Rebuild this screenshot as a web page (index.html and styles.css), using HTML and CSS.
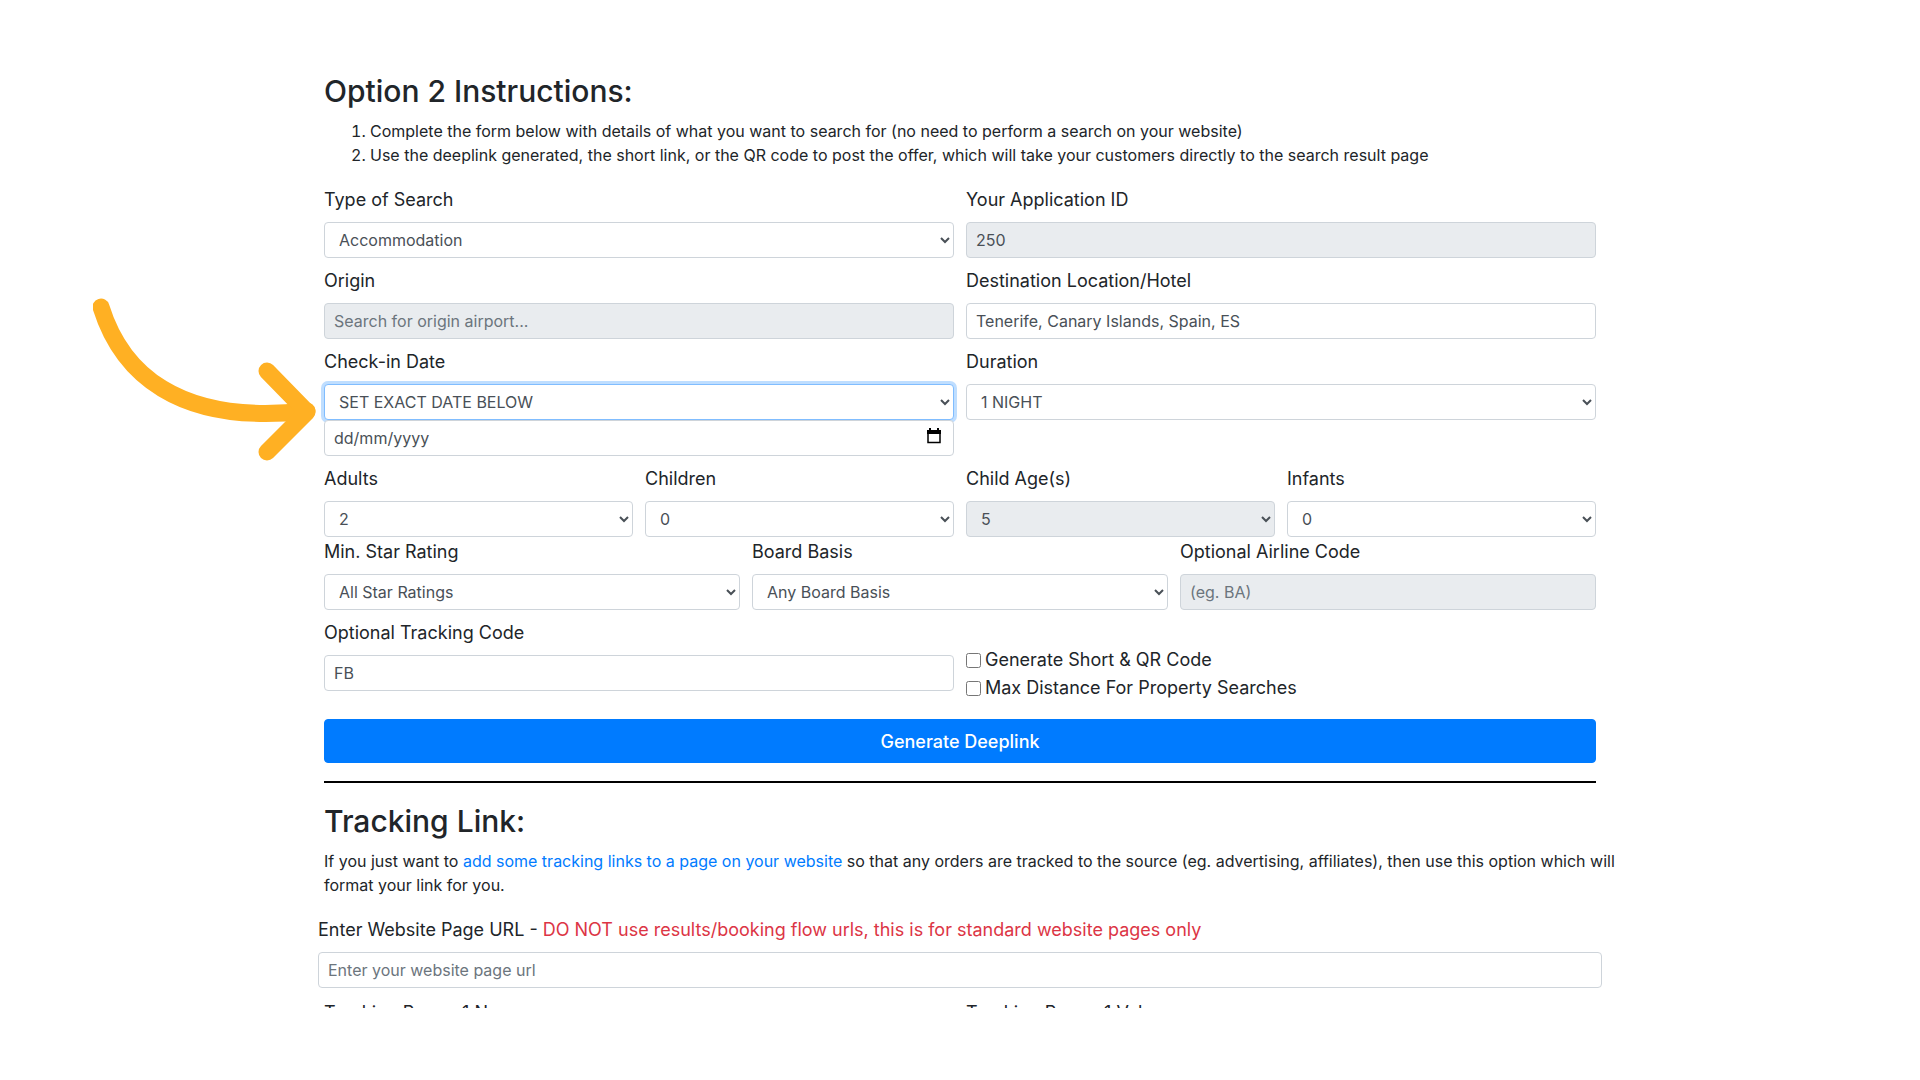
FILE: index.html
```html
<!DOCTYPE html>
<html lang="en-GB">
	<head>
		<meta charset="utf-8">
		<title>Deeplink Generator</title>
		<link rel="stylesheet" href="styles.css">
	</head>
	<body>
	<div class="container">
		<h2>Option 2 Instructions:</h2>
		<ol class="steps">
			<li>Complete the form below with details of what you want to search for (no need to perform a search on your website)</li>
			<li>Use the deeplink generated, the short link, or the QR code to post the offer, which will take your customers directly to the search result page</li>
		</ol>

		<form action="#" method="post" id="deeplinkForm">
			<div class="row">
				<div class="group">
					<label for="searchType">Type of Search</label>
					<select class="control" id="searchType"><option>Accommodation</option></select>
				</div>
				<div class="group">
					<label for="appId">Your Application ID</label>
					<input class="control" type="text" id="appId" value="250" readonly>
				</div>
			</div>
			<div class="row">
				<div class="group">
					<label for="origin">Origin</label>
					<input class="control" type="text" id="origin" placeholder="Search for origin airport..." disabled>
				</div>
				<div class="group">
					<label for="destination">Destination Location/Hotel</label>
					<input class="control" type="text" id="destination" value="Tenerife, Canary Islands, Spain, ES">
				</div>
			</div>
			<div class="row">
				<div class="group checkin">
					<label for="checkin">Check-in Date</label>
					<select class="control active" id="checkin"><option>SET EXACT DATE BELOW</option></select>
					<div class="date">
						<input class="control" type="text" id="exactDate" value="dd/mm/yyyy" aria-label="Exact date">
						<button type="button" class="calendar" aria-label="Show date picker">
							<svg width="14" height="16" viewBox="0 0 14 16"><path d="M1 3h12v11.500H1z" fill="none" stroke="#000" stroke-width="1.500"/><path d="M0 2h14v4H0zM2 0h2v3H2zM10 0h2v3h-2z"/></svg>
						</button>
					</div>
					<svg class="arrow" width="224" height="166" viewBox="0 0 224 166" fill="none" stroke="#ffb023" stroke-width="17" stroke-linecap="round" stroke-linejoin="round"><path d="M8 10C28 74 83 129 214 114"/><path d="M174 74L214 115L174 155"/></svg>
				</div>
				<div class="group">
					<label for="duration">Duration</label>
					<select class="control" id="duration"><option>1 NIGHT</option></select>
				</div>
			</div>
			<div class="row tight">
				<div class="group">
					<label for="adults">Adults</label>
					<select class="control" id="adults"><option>2</option></select>
				</div>
				<div class="group">
					<label for="children">Children</label>
					<select class="control" id="children"><option>0</option></select>
				</div>
				<div class="group">
					<label for="childAge">Child Age(s)</label>
					<select class="control" id="childAge" disabled><option>5</option></select>
				</div>
				<div class="group">
					<label for="infants">Infants</label>
					<select class="control" id="infants"><option>0</option></select>
				</div>
			</div>
			<div class="row">
				<div class="group">
					<label for="stars">Min. Star Rating</label>
					<select class="control" id="stars"><option>All Star Ratings</option></select>
				</div>
				<div class="group">
					<label for="board">Board Basis</label>
					<select class="control" id="board"><option>Any Board Basis</option></select>
				</div>
				<div class="group">
					<label for="airline">Optional Airline Code</label>
					<input class="control" type="text" id="airline" placeholder="(eg. BA)" disabled>
				</div>
			</div>
			<div class="row">
				<div class="group">
					<label for="trackingCode">Optional Tracking Code</label>
					<input class="control" type="text" id="trackingCode" value="FB">
				</div>
				<div class="group checks">
					<label><input type="checkbox" name="qr">Generate Short &amp; QR Code</label>
					<label><input type="checkbox" name="distance">Max Distance For Property Searches</label>
				</div>
			</div>
			<button type="submit" class="btn">Generate Deeplink</button>
		</form>

		<hr>

		<h2>Tracking Link:</h2>
		<p class="intro">If you just want to <a href="#">add some tracking links to a page on your website</a> so that any orders are tracked to the source (eg. advertising, affiliates), then use this option which will format your link for you.</p>

		<form action="#" method="post" id="trackingForm">
			<div class="group wide">
				<label for="pageUrl">Enter Website Page URL - <span class="danger">DO NOT use results/booking flow urls, this is for standard website pages only</span></label>
				<input class="control" type="text" id="pageUrl" placeholder="Enter your website page url">
			</div>
			<div class="row cut">
				<div class="group">Tracking Param 1 Name</div>
				<div class="group">Tracking Param 1 Value</div>
			</div>
		</form>
	</div>
	</body>
</html>
```
FILE: styles.css
```css
*{box-sizing:border-box;}
body{margin:0; padding:72px 24px; background:#fff; color:#212529; font:18px/27px Inter, "Liberation Sans", sans-serif;}
.container{max-width:1272px; margin:0 auto;}
h2{margin:0 0 8px; font-size:30px; line-height:39px; font-weight:500;}
.steps{margin:0 0 18px; padding-left:46px; font-size:16px; line-height:24px;}
.row{display:flex; gap:12px; margin-bottom:8px;}
.row.tight{margin-bottom:0;}
.group{flex:1 1 0; min-width:0;}
label{display:block; margin-bottom:8px; line-height:29px;}
.control{display:block; width:100%; height:36px; padding:4px 9px; border:1px solid #ced4da; border-radius:4px; background:#fff; color:#495057; font:16px/24px Inter, "Liberation Sans", sans-serif;}
select.control{padding:4px 10px;}
.control::placeholder{color:#6c757d; opacity:1;}
.control:disabled{opacity:1;}
.control:disabled,.control[readonly]{background:#e9ecef;}
.active{border-color:#80bdff; box-shadow:0 0 0 3px rgba(0,123,255,.25);}
.checkin{position:relative;}
.date{position:relative;}
.calendar{position:absolute; top:8px; right:13px; display:flex; padding:0; border:0; background:none;}
.arrow{position:absolute; right:100%; top:-50px; margin-right:7px;}
.checks{padding-top:28px;}
.checks label{display:flex; align-items:center; gap:4px; margin:0; line-height:28px;}
.checks input{width:15px; height:15px; margin:0;}
.btn{display:block; width:100%; height:44px; margin-top:17px; border:1px solid #007bff; border-radius:4px; background:#007bff; color:#fff; font:500 18px/27px Inter, "Liberation Sans", sans-serif;}
hr{height:2px; margin:18px 0 19px; border:0; background:#000;}
a{color:#007bff; text-decoration:none;}
.intro{margin:0 -24px 18px 0; font-size:16px; line-height:24px;}
.wide{margin:0 -6px 11px;}
.danger{color:#dc3545;}
/* next row only peeks in */
.cut{height:9px; overflow:hidden;}
```
